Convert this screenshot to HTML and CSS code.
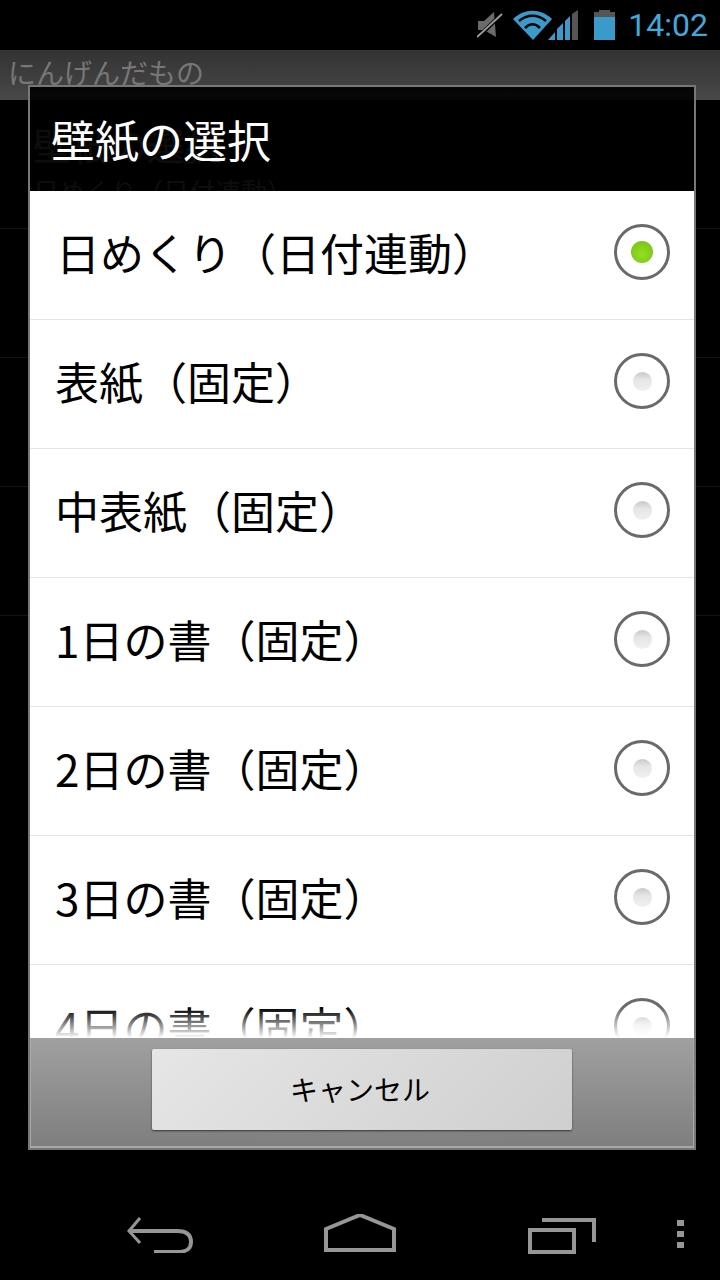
FILE: index.html
```html
<!DOCTYPE html>
<html lang="ja">
<head>
    <meta charset="UTF-8">
    <meta name="viewport" content="width=device-width, initial-scale=1.0">
    <title>壁紙の選択</title>
    <link rel="stylesheet" href="styles.css">
</head>
<body>
    <!-- Status bar -->
    <div class="status-bar">
        <svg class="icon-mute" width="26" height="30" viewBox="0 0 26 30">
            <path d="M1 11 L7 11 L17 2 L19 27 L7 20 L1 20 Z" fill="#6a6a6a"/>
            <line x1="0" y1="28" x2="25" y2="4" stroke="#000" stroke-width="4"/>
            <line x1="0" y1="27" x2="25" y2="4" stroke="#999" stroke-width="2"/>
        </svg>
        <svg class="icon-signal" width="66" height="30" viewBox="0 0 66 30">
            <path d="M0 9 C11 -2 28 -2 39 9 L20 30 Z" fill="#3a9ac9"/>
            <path d="M6 11 C14 4 25 4 33 11" stroke="#000" stroke-width="2.5" fill="none"/>
            <path d="M12 18 C17 13 22 13 27 18" stroke="#000" stroke-width="2.5" fill="none"/>
            <path d="M35 30 L42 22 L42 30 Z" fill="#3a9ac9"/>
            <path d="M44 30 L44 19 L50 13 L50 30 Z" fill="#3a9ac9"/>
            <path d="M52 30 L52 11 L57 6 L57 30 Z" fill="#3a9ac9"/>
            <path d="M59 30 L59 4 L65 0 L65 30 Z" fill="#555"/>
        </svg>
        <svg class="icon-battery" width="21" height="30" viewBox="0 0 21 30">
            <rect x="5" y="0" width="11" height="2" fill="#555"/>
            <rect x="0" y="2" width="21" height="5" fill="#555"/>
            <rect x="0" y="7" width="21" height="23" fill="#3a9ac9"/>
        </svg>
        <span class="clock">14:02</span>
    </div>

    <!-- Dimmed page behind the dialog -->
    <div class="page">
        <div class="page-title">にんげんだもの</div>
        <div class="page-row">
            <div class="row-title">壁紙の選択</div>
            <div class="row-sub">日めくり（日付連動）</div>
        </div>
        <div class="page-row"></div>
        <div class="page-row"></div>
        <div class="page-row"></div>
    </div>

    <!-- Dialog -->
    <div class="dialog">
        <div class="dialog-title">壁紙の選択</div>
        <div class="list">
            <div class="item item-first"><span>日めくり（日付連動）</span><span class="radio radio-on"></span></div>
            <div class="item"><span>表紙（固定）</span><span class="radio"></span></div>
            <div class="item"><span>中表紙（固定）</span><span class="radio"></span></div>
            <div class="item"><span>1日の書（固定）</span><span class="radio"></span></div>
            <div class="item"><span>2日の書（固定）</span><span class="radio"></span></div>
            <div class="item"><span>3日の書（固定）</span><span class="radio"></span></div>
            <div class="item"><span>4日の書（固定）</span><span class="radio"></span></div>
        </div>
        <div class="dialog-footer">
            <button class="cancel">キャンセル</button>
        </div>
    </div>

    <!-- Navigation bar -->
    <div class="nav-bar">
        <svg class="nav-back" width="66" height="36" viewBox="0 0 66 36">
            <path d="M13 1 L2 14 L13 26" stroke="#969696" stroke-width="3" fill="none"/>
            <path d="M3 14 L50 14 C60 14 64 18 64 25 C64 32 60 35 50 35 L27 35" stroke="#969696" stroke-width="4" fill="none"/>
        </svg>
        <svg class="nav-home" width="72" height="38" viewBox="0 0 72 38">
            <path d="M2 36 L2 15 L36 1 L70 15 L70 36 Z" stroke="#969696" stroke-width="4" fill="none"/>
        </svg>
        <svg class="nav-recent" width="68" height="36" viewBox="0 0 68 36">
            <rect x="2" y="12" width="44" height="22" stroke="#969696" stroke-width="4" fill="none"/>
            <path d="M14 2 L66 2 L66 24" stroke="#969696" stroke-width="4" fill="none"/>
        </svg>
        <svg class="nav-menu" width="7" height="30" viewBox="0 0 7 30">
            <rect width="7" height="6" fill="#969696"/>
            <rect y="11" width="7" height="6" fill="#969696"/>
            <rect y="22" width="7" height="6" fill="#969696"/>
        </svg>
    </div>
</body>
</html>
```
FILE: styles.css
```css
* {
    box-sizing: border-box;
}
html, body {
    margin: 0;
    padding: 0;
}
body {
    position: relative;
    width: 720px;
    height: 1280px;
    overflow: hidden;
    background-color: #000;
    font-family: "Noto Sans CJK JP", "Noto Sans", sans-serif;
    color: #000;
}
.status-bar {
    height: 50px;
    display: flex;
    align-items: center;
    justify-content: flex-end;
    padding-right: 12px;
}
.icon-mute {
    margin-right: 10px;
}
.icon-signal {
    margin-right: 15px;
}
.clock {
    margin-left: 13px;
    font-family: Roboto, sans-serif;
    font-size: 32px;
    color: #3fa9dc;
}
.page-title {
    height: 50px;
    padding: 5px 8px;
    background: linear-gradient(#333, #484848);
    color: #777;
    font-size: 28px;
    line-height: 34px;
}
.page-row {
    height: 129px;
    padding: 19px 33px 0;
    border-bottom: 1px solid #141414;
    color: #888;
}
.row-title {
    font-size: 38px;
    line-height: 50px;
}
.row-sub {
    margin-top: 6px;
    font-size: 26px;
    line-height: 32px;
}
.dialog {
    position: absolute;
    left: 28px;
    top: 85px;
    width: 668px;
    height: 1065px;
    border: 2px solid #777;
    display: flex;
    flex-direction: column;
    background-color: rgba(0, 0, 0, 0.9);
}
.dialog-title {
    height: 104px;
    padding: 25px 21px 0;
    color: #fff;
    font-size: 44px;
    line-height: 54px;
}
.list {
    position: relative;
    height: 847px;
    overflow: hidden;
    background-color: #fff;
}
.list::after {
    content: "";
    position: absolute;
    left: 0;
    right: 0;
    bottom: 0;
    height: 30px;
    background: linear-gradient(rgba(255, 255, 255, 0), #fff);
}
.item {
    height: 129px;
    padding: 0 24px 6px 25px;
    display: flex;
    align-items: center;
    justify-content: space-between;
    border-bottom: 1px solid #e4e4e4;
    font-size: 44px;
}
.item-first {
    padding-left: 26px;
}
.radio {
    width: 56px;
    height: 56px;
    border: 3px solid #6a6a6a;
    border-radius: 50%;
    background-color: #fff;
    display: flex;
    align-items: center;
    justify-content: center;
}
.radio::before {
    content: "";
    width: 19px;
    height: 19px;
    border-radius: 50%;
    background: linear-gradient(#c8c8c8, #e6e6e6 40%, #f0f0f0);
}
.radio-on::before {
    width: 22px;
    height: 22px;
    background: radial-gradient(circle at 50% 60%, #94e024, #78c414 80%, #8aa868);
}
.dialog-footer {
    flex: 1;
    display: flex;
    justify-content: center;
    padding-top: 11px;
    background: linear-gradient(#a0a0a0, #7e7e7e);
    box-shadow: inset 0 -2px 0 #a8a8a8, inset 1px 0 0 #a8a8a8, inset -1px 0 0 #a8a8a8;
}
.cancel {
    width: 420px;
    height: 81px;
    padding: 0 4px 2px 0;
    border: none;
    border-radius: 2px;
    background: linear-gradient(135deg, #e6e6e6, #cfcfcf);
    box-shadow: 0 1px 2px rgba(0, 0, 0, 0.6);
    font-family: inherit;
    font-size: 28px;
    color: #000;
}
.nav-bar svg {
    position: absolute;
}
.nav-back {
    left: 127px;
    top: 1217px;
}
.nav-home {
    left: 324px;
    top: 1214px;
}
.nav-recent {
    left: 528px;
    top: 1218px;
}
.nav-menu {
    left: 677px;
    top: 1220px;
}
```
